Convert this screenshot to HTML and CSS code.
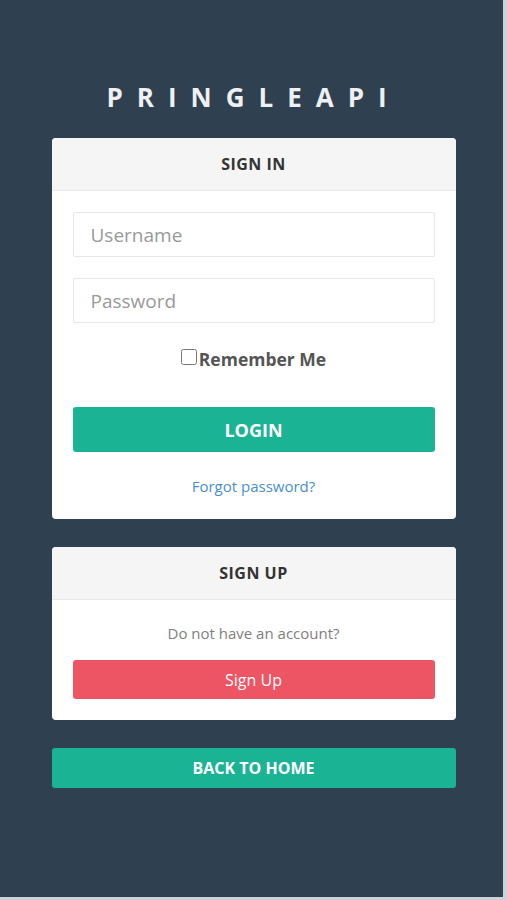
FILE: index.html
```html
<!DOCTYPE html>
<html>
<head>
<meta charset="utf-8">
<link rel="stylesheet" href="styles.css">
</head>
<body>
<div class="page">
  <h1 class="brand">PRINGLEAPI</h1>
  <div class="card">
    <div class="card-head">SIGN IN</div>
    <div class="card-body">
      <input class="field" type="text" placeholder="Username">
      <input class="field field-gap" type="password" placeholder="Password">
      <label class="remember"><input type="checkbox" class="check">Remember Me</label>
      <button class="btn btn-login">LOGIN</button>
      <a class="forgot" href="#">Forgot password?</a>
    </div>
  </div>
  <div class="card card-gap">
    <div class="card-head">SIGN UP</div>
    <div class="card-body body-signup">
      <p class="note">Do not have an account?</p>
      <button class="btn btn-signup">Sign Up</button>
    </div>
  </div>
  <button class="btn btn-home">BACK TO HOME</button>
</div>
</body>
</html>
```
FILE: styles.css
```css
html, body {
  margin: 0;
  padding: 0;
}
body {
  font-family: "Open Sans", "Liberation Sans", sans-serif;
  background: #2f4050;
}
.page {
  width: 507px;
  height: 900px;
  box-sizing: border-box;
  background: #2f4050;
  box-shadow: inset -4px -3px 0 #cdd2d8;
  display: flex;
  flex-direction: column;
  align-items: center;
  padding-top: 81px;
}
.brand {
  margin: 0;
  color: #eef0f2;
  font-size: 26px;
  font-weight: 700;
  line-height: 32px;
  letter-spacing: 14px;
}
.card {
  margin-top: 25px;
  width: 404px;
  background: #fff;
  border-radius: 4px;
  overflow: hidden;
}
.card-gap {
  margin-top: 28px;
}
.card-head {
  height: 52px;
  line-height: 52px;
  background: #f5f5f5;
  border-bottom: 1px solid #e7eaec;
  text-align: center;
  color: #333;
  font-size: 16px;
  font-weight: 700;
  letter-spacing: 0.5px;
}
.card-body {
  padding: 21px 21px 23px;
  display: flex;
  flex-direction: column;
  align-items: stretch;
}
.field {
  height: 45px;
  box-sizing: border-box;
  border: 1px solid #e5e6e7;
  border-radius: 2px;
  padding: 0 17px;
  font-family: inherit;
  font-size: 19px;
  color: #555;
  outline: none;
}
.field::placeholder {
  color: #999;
}
.field-gap {
  margin-top: 21px;
}
.remember {
  margin-top: 24px;
  height: 24px;
  display: flex;
  align-items: center;
  justify-content: center;
  font-size: 17.5px;
  font-weight: 700;
  color: #555;
}
.check {
  width: 16px;
  height: 16px;
  margin: 0 2px 4px 0;
}
.btn {
  border: none;
  border-radius: 3px;
  color: #fff;
  font-family: inherit;
  cursor: pointer;
  padding: 0;
}
.btn-login {
  margin-top: 36px;
  height: 45px;
  background: #1ab394;
  font-size: 18px;
  font-weight: 700;
}
.forgot {
  margin-top: 24px;
  line-height: 20px;
  text-align: center;
  font-size: 15px;
  color: #4a8fcb;
  text-decoration: none;
}
.body-signup {
  padding: 23px 21px 21px;
}
.note {
  margin: 0;
  line-height: 20px;
  text-align: center;
  font-size: 15px;
  color: #808080;
}
.btn-signup {
  margin-top: 17px;
  height: 39px;
  background: #ed5565;
  font-size: 16px;
}
.btn-home {
  margin-top: 28px;
  width: 404px;
  height: 40px;
  background: #1ab394;
  font-size: 16px;
  font-weight: 700;
}
```
